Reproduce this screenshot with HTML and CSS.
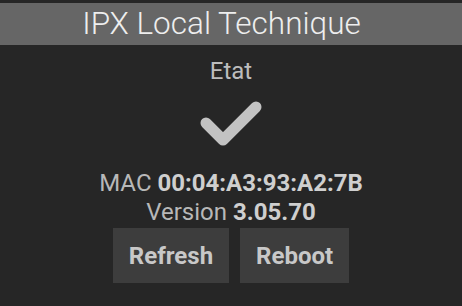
FILE: index.html
```html
<!DOCTYPE html>
<html>
<head>
    <meta charset="utf-8">
    <link rel="stylesheet" href="styles.css">
</head>
<body>
<header class="ipx-header">
    <h1 class="ipx-title">IPX Local Technique</h1>
</header>

<div class="ipx-status">
    <div class="ipx-status-label">Etat</div>
    <svg class="ipx-status-icon" width="64" height="52" viewBox="0 0 64 52">
        <polyline points="7,23 24,40 57,7" fill="none" stroke="#c2c2c2" stroke-width="11" stroke-linecap="round" stroke-linejoin="round"/>
    </svg>
</div>

<div class="ipx-info">
    <div class="ipx-info-row">MAC <b>00:04:A3:93:A2:7B</b></div>
    <div class="ipx-info-row">Version <b>3.05.70</b></div>
</div>

<div class="ipx-actions">
    <button class="ipx-button" id="refresh">Refresh</button>
    <button class="ipx-button" id="reboot">Reboot</button>
</div>
</body>
</html>
```

FILE: styles.css
```css
/* Page */
body {
    margin: 0;
    background-color: #262626;
    font-family: Roboto, "Liberation Sans", sans-serif;
    text-align: center;
}

/* Title bar */
.ipx-header {
    margin-top: 3px;
    height: 42px;
    background-color: #666666;
}

.ipx-title {
    margin: 0;
    padding-right: 19px;
    font-size: 31.5px;
    font-weight: 300;
    line-height: 42px;
    color: #eeeeee;
}

/* State block */
.ipx-status-label {
    margin-top: 12px;
    font-size: 24px;
    line-height: 29px;
    color: #bdbdbd;
}

.ipx-status-icon {
    display: block;
    margin: 14px auto 0;
}

/* MAC / version */
.ipx-info {
    margin-top: 17px;
    color: #b8b8b8;
    font-size: 24px;
    line-height: 29px;
}

.ipx-info b {
    color: #cfcfcf;
}

/* Buttons */
.ipx-actions {
    display: flex;
    justify-content: center;
    gap: 11px;
    margin-top: 1px;
}

.ipx-button {
    height: 55px;
    padding: 0 16px;
    border: none;
    background-color: #3d3d3d;
    color: #c8c8c8;
    font-family: inherit;
    font-size: 24px;
    font-weight: bold;
    cursor: pointer;
}
```
